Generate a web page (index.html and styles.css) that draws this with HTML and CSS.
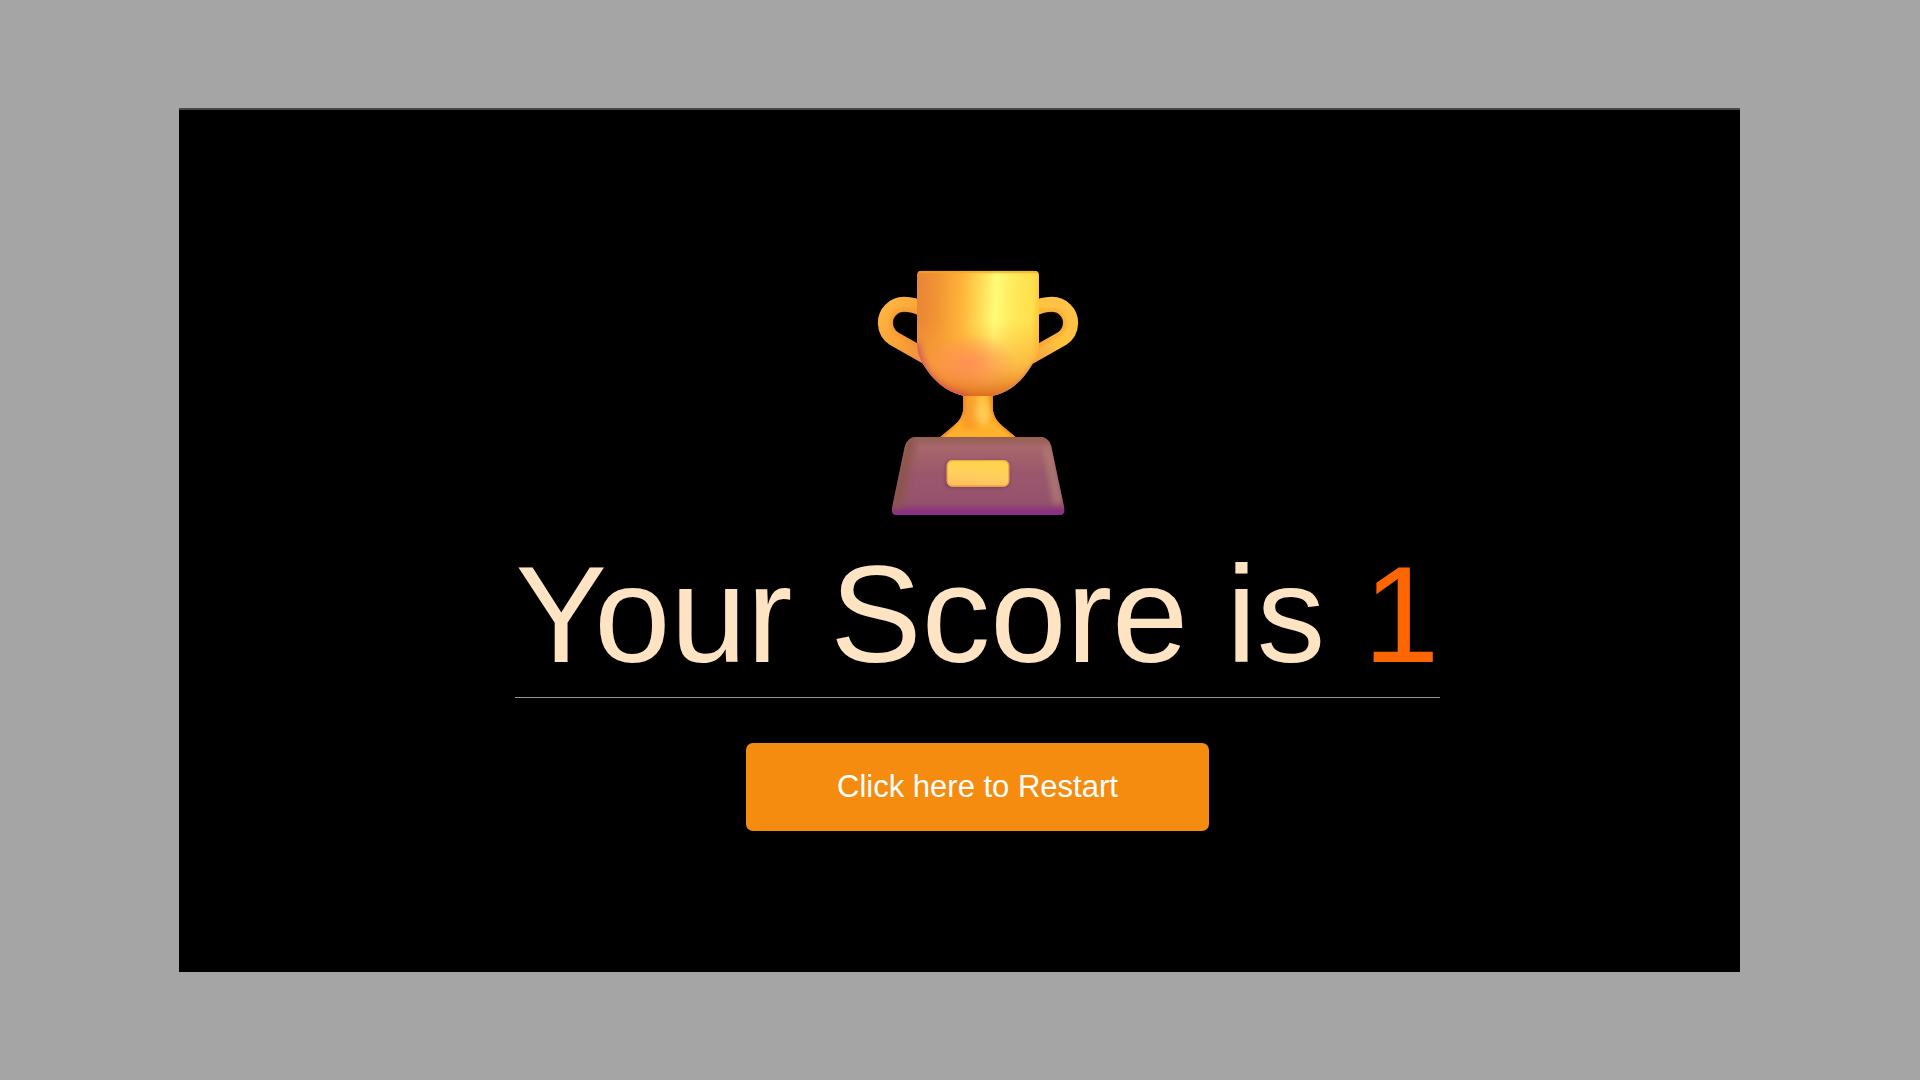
FILE: index.html
```
<!DOCTYPE html>
<html lang="en">
<head>
<meta charset="utf-8">
<meta name="viewport" content="width=device-width, initial-scale=1">
<title>Your Score</title>
<link rel="stylesheet" href="styles.css">
</head>
<body>
<main class="panel">
  <section class="result">
    <svg class="trophy" viewBox="-5 0 720 840" role="img" aria-label="Trophy">
      <defs>
        <linearGradient id="cup" x1="0" x2="1" y1="0" y2="0.05">
          <stop offset="0" stop-color="#e78438"/>
          <stop offset="0.18" stop-color="#f19434"/>
          <stop offset="0.38" stop-color="#ffb43a"/>
          <stop offset="0.53" stop-color="#ffdc55"/>
          <stop offset="0.65" stop-color="#fffb78"/>
          <stop offset="0.8" stop-color="#ffe95c"/>
          <stop offset="0.96" stop-color="#ffdf4b"/>
          <stop offset="1" stop-color="#ffc83e"/>
        </linearGradient>
        <linearGradient id="cupLow" x1="0" x2="0" y1="0" y2="1">
          <stop offset="0.4" stop-color="#ffa834" stop-opacity="0"/>
          <stop offset="0.75" stop-color="#f9a038" stop-opacity="0.6"/>
          <stop offset="1" stop-color="#de6c1c"/>
        </linearGradient>
        <radialGradient id="blush">
          <stop offset="0" stop-color="#ff8a58" stop-opacity="0.85"/>
          <stop offset="0.5" stop-color="#ff8a58" stop-opacity="0.45"/>
          <stop offset="1" stop-color="#ff8a58" stop-opacity="0"/>
        </radialGradient>
        <linearGradient id="handleL" x1="0" x2="1" y1="0" y2="1">
          <stop offset="0" stop-color="#ffb541"/>
          <stop offset="0.5" stop-color="#f9a236"/>
          <stop offset="1" stop-color="#f08a45"/>
        </linearGradient>
        <linearGradient id="handleR" x1="1" x2="0" y1="0" y2="1">
          <stop offset="0" stop-color="#ffc246"/>
          <stop offset="0.5" stop-color="#ffc33e"/>
          <stop offset="1" stop-color="#f79b45"/>
        </linearGradient>
        <linearGradient id="stem" x1="0" x2="1" y1="0" y2="0">
          <stop offset="0" stop-color="#f79a28"/>
          <stop offset="0.35" stop-color="#f9a431"/>
          <stop offset="0.62" stop-color="#ffc445"/>
          <stop offset="1" stop-color="#f9a21a"/>
        </linearGradient>
        <linearGradient id="base" x1="0" x2="0" y1="0" y2="1">
          <stop offset="0" stop-color="#90604f"/>
          <stop offset="0.14" stop-color="#a8666c"/>
          <stop offset="0.45" stop-color="#9b586c"/>
          <stop offset="0.83" stop-color="#96526d"/>
          <stop offset="0.94" stop-color="#8b3577"/>
          <stop offset="1" stop-color="#852f80"/>
        </linearGradient>
        <linearGradient id="plate" x1="0.3" x2="0.5" y1="1" y2="0">
          <stop offset="0" stop-color="#ffbd62"/>
          <stop offset="0.5" stop-color="#ffd15b"/>
          <stop offset="1" stop-color="#ffd44c"/>
        </linearGradient>
        <filter id="soft" x="-50%" y="-50%" width="200%" height="200%"><feGaussianBlur stdDeviation="9"/></filter>
        <filter id="fine" x="-50%" y="-50%" width="200%" height="200%"><feGaussianBlur stdDeviation="4"/></filter>
        <clipPath id="cupClip"><path d="M185 62H524Q538 62 538 76V272C538 304 529 327 517 344C488 393 450 428 397 438H313C258 426 217 388 190 342C178 321 172 301 172 272V76Q172 62 185 62Z"/></clipPath>
        <clipPath id="baseClip"><path d="M171 560H540Q566 560 574 586L614 774Q617 795 600 795H111Q93 795 97 774L135 592Q142 560 171 560Z"/></clipPath>
        <clipPath id="stemClip"><path d="M311 434H399V476Q401 505 428 528L468 561H242L281 528Q310 505 311 476Z"/></clipPath>
      </defs>
      <g fill="none">
        <path d="M190 178Q164 163 133 163A56 56 0 0 0 77 219Q78 250 103 266L212 328" stroke="url(#handleL)" stroke-width="45"/>
        <path d="M182 186Q158 180 133 180A38 38 0 0 0 94 219Q95 242 112 253L188 297" stroke="#e98630" stroke-width="8" opacity="0.5" filter="url(#fine)"/>
        <path d="M520 178Q546 163 577 163A56 56 0 0 1 633 219Q632 250 607 266L498 328" stroke="url(#handleR)" stroke-width="45"/>
        <path d="M528 186Q552 180 577 180A38 38 0 0 1 616 219Q615 242 598 253L522 297" stroke="#ef9127" stroke-width="8" opacity="0.55" filter="url(#fine)"/>
      </g>
      <g clip-path="url(#stemClip)">
        <rect x="240" y="430" width="230" height="132" fill="#ffb22c"/>
        <rect x="308" y="430" width="94" height="90" fill="url(#stem)" filter="url(#fine)"/>
        <path d="M398 430V476Q401 505 468 562M311 430V476Q310 505 242 562" fill="none" stroke="#ef8726" stroke-width="12" filter="url(#fine)"/>
        <ellipse cx="372" cy="490" rx="18" ry="34" fill="#ffca55" filter="url(#soft)"/>
        <ellipse cx="328" cy="526" rx="28" ry="12" fill="#f99a23" filter="url(#soft)"/>
      </g>
      <g clip-path="url(#cupClip)">
        <rect x="170" y="60" width="370" height="380" fill="url(#cup)"/>
        <rect x="170" y="60" width="370" height="380" fill="url(#cupLow)"/>
        <ellipse cx="330" cy="340" rx="140" ry="90" fill="url(#blush)"/>
        <path d="M164 280Q188 426 320 448" fill="none" stroke="#cb4a68" stroke-width="28" opacity="0.85" filter="url(#soft)"/>
        <path d="M390 446Q480 425 528 336" fill="none" stroke="#d77568" stroke-width="15" opacity="0.75" filter="url(#fine)"/>
        <path d="M172 63H538V64H172Z" fill="none" stroke="#f6a51e" stroke-width="12" opacity="0.65"/>
      </g>
      <g clip-path="url(#baseClip)">
        <rect x="90" y="558" width="530" height="240" fill="url(#base)"/>
        <path d="M153 567L107 780" stroke="#895548" stroke-width="34" opacity="0.85" filter="url(#soft)"/>
        <path d="M562 590L596 760" stroke="#ae7c72" stroke-width="26" opacity="0.9" filter="url(#soft)"/>
        <rect x="88" y="784" width="534" height="22" fill="#8a2f87" filter="url(#fine)"/>
      </g>
      <rect x="256" y="631" width="194" height="84" rx="18" fill="#703b56" opacity="0.6" filter="url(#fine)"/>
      <rect x="261" y="630" width="188" height="80" rx="17" fill="url(#plate)"/>
      <rect x="263" y="632" width="184" height="76" rx="15" fill="none" stroke="#e99a35" stroke-width="4" opacity="0.65"/>
    </svg>
    <h1 class="score">Your Score is <span class="points">1</span></h1>
    <button class="restart" type="button">Click here to Restart</button>
  </section>
</main>
</body>
</html>
```
FILE: styles.css
```
* {
  box-sizing: border-box;
}

body {
  margin: 0;
  min-height: 100vh;
  padding: 10vh 180px 10vh 179px;
  background: #a5a5a5;
  font-family: "Liberation Sans", Arial, sans-serif;
}

.panel {
  min-height: 80vh;
  padding: 140px 0 140px 36px;
  display: flex;
  justify-content: center;
  background: #000;
  border-top: 2px solid #48484a;
}

.result {
  display: flex;
  flex-direction: column;
  align-items: center;
}

.trophy {
  width: 240px;
  height: 280px;
}

.score {
  margin: 8px 0 45px;
  padding-bottom: 5px;
  border-bottom: 1px solid #969696;
  color: #ffe4c4;
  font-size: 137px;
  font-weight: 400;
  line-height: 154px;
}

.points {
  color: #ff6600;
}

.restart {
  width: 50%;
  padding: 26px 0;
  border: 0;
  border-radius: 7px;
  background: #f58c0f;
  color: #fff;
  font-family: inherit;
  font-size: 31px;
  line-height: 36px;
  cursor: pointer;
}
```
